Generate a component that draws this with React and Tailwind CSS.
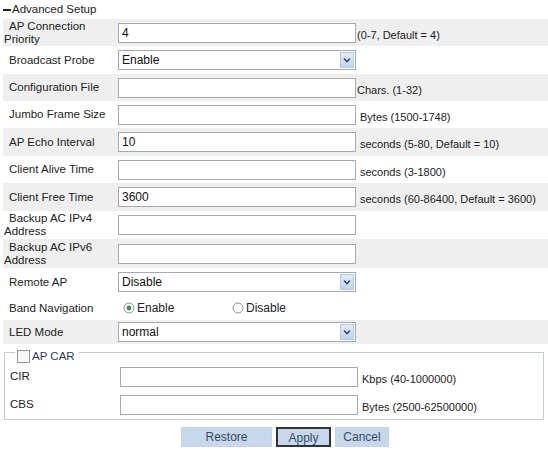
const rows = [
  { label: ['AP Connection', 'Priority'], type: 'input', value: '4', note: '(0-7, Default = 4)', h: 27, gray: true, tight: true },
  { label: ['Broadcast Probe'], type: 'select', value: 'Enable', h: 28 },
  { label: ['Configuration File'], type: 'input', value: '', note: 'Chars. (1-32)', h: 27, gray: true, tight: true },
  { label: ['Jumbo Frame Size'], type: 'input', value: '', note: 'Bytes (1500-1748)', h: 27 },
  { label: ['AP Echo Interval'], type: 'input', value: '10', note: 'seconds (5-80, Default = 10)', h: 28, gray: true },
  { label: ['Client Alive Time'], type: 'input', value: '', note: 'seconds (3-1800)', h: 27 },
  { label: ['Client Free Time'], type: 'input', value: '3600', note: 'seconds (60-86400, Default = 3600)', h: 28, gray: true },
  { label: ['Backup AC IPv4', 'Address'], type: 'input', value: '', h: 28 },
  { label: ['Backup AC IPv6', 'Address'], type: 'input', value: '', h: 29, gray: true },
  { label: ['Remote AP'], type: 'select', value: 'Disable', h: 28 },
  { label: ['Band Navigation'], type: 'radio', h: 24 },
  { label: ['LED Mode'], type: 'select', value: 'normal', h: 24, gray: true },
]

function TextBox({ value }) {
  return (
    <div className="flex h-[20px] w-[238px] shrink-0 items-center border border-[#a3aab3] bg-white pl-[3px] text-[12px] text-[#111]">
      {value}
    </div>
  )
}

function SelectBox({ value }) {
  return (
    <div className="flex h-[20px] w-[238px] shrink-0 items-center justify-between border border-[#a3aab3] bg-white pl-[3px] pr-[1px] text-[12px] text-[#111]">
      <span>{value}</span>
      <div className="flex h-[16px] w-[14px] items-center justify-center border border-[#b8c8de] bg-gradient-to-b from-[#e4ecf8] to-[#c3d3ea]">
        <svg width="8" height="6" viewBox="0 0 8 6">
          <path d="M1 1.5 L4 4.5 L7 1.5" fill="none" stroke="#2c4d86" strokeWidth="1.6" />
        </svg>
      </div>
    </div>
  )
}

function Radio({ checked }) {
  return (
    <svg width="12" height="12" viewBox="0 0 12 12" className="shrink-0">
      <circle cx="6" cy="6" r="5" fill="#fbfbfb" stroke="#8d959e" strokeWidth="1" />
      {checked && <circle cx="6" cy="6" r="2.4" fill="#3e8e4a" />}
    </svg>
  )
}

function Label({ lines }) {
  return (
    <div className="w-[115px] shrink-0 pl-[1px] indent-[5px] text-[11.5px] leading-[13px] text-[#222]">
      {lines.map((l, i) => (
        <div key={i} className={i > 0 ? 'indent-0' : ''}>
          {l}
        </div>
      ))}
    </div>
  )
}

export default function App() {
  return (
    <div className="w-[548px] bg-white font-['Liberation_Sans',Arial,sans-serif] text-[11px] text-[#222]">
      <div className="flex h-[19px] items-center pl-[3px] text-[11.5px]">
        <span className="mr-[1px] inline-block h-[2px] w-[8px] bg-[#222]" />
        <span>Advanced Setup</span>
      </div>

      <div className="pl-[3px]">
        {rows.map((r, i) => (
          <div
            key={i}
            className={`flex items-center ${r.gray ? 'bg-[#efefef]' : 'bg-white'}`}
            style={{ height: r.h }}
          >
            <Label lines={r.label} />
            {r.type === 'input' && <TextBox value={r.value} />}
            {r.type === 'select' && <SelectBox value={r.value} />}
            {r.type === 'radio' && (
              <div className="flex items-center pl-[5px] text-[12px]">
                <Radio checked />
                <span className="ml-[2px] w-[95px]">Enable</span>
                <Radio />
                <span className="ml-[2px]">Disable</span>
              </div>
            )}
            {r.note && (
              <span className={`whitespace-nowrap pt-[5px] ${r.tight ? 'pl-[1px]' : 'pl-[4px]'}`}>{r.note}</span>
            )}
          </div>
        ))}
      </div>

      <div className="relative mx-[4px] mt-[8px] border border-[#c3cbd3] pt-[10px]">
        <div className="absolute -top-[5px] left-[10px] flex items-center bg-white pr-[4px] pl-[2px] text-[11.5px]">
          <span className="mr-[2px] inline-block h-[13px] w-[13px] border border-[#8e969f] bg-gradient-to-br from-[#f2f2f2] to-[#ffffff]" />
          <span className="text-[#2c3b66]">AP CAR</span>
        </div>
        <div className="flex h-[28px] items-center">
          <div className="w-[115px] shrink-0 pl-[5px] text-[11.5px]">CIR</div>
          <TextBox value="" />
          <span className="whitespace-nowrap pl-[4px] pt-[5px]">Kbps (40-1000000)</span>
        </div>
        <div className="flex h-[28px] items-center">
          <div className="w-[115px] shrink-0 pl-[5px] text-[11.5px]">CBS</div>
          <TextBox value="" />
          <span className="whitespace-nowrap pl-[4px] pt-[5px]">Bytes (2500-62500000)</span>
        </div>
      </div>

      <div className="mt-[7px] flex justify-center gap-[4px] pl-[22px] text-[12px] text-[#3b4a6b]">
        <button className="h-[20px] w-[91px] border border-[#c4d5ea] bg-[#c7d7ec]">Restore</button>
        <button className="h-[20px] w-[55px] border-2 border-[#333] bg-[#c7d7ec]">Apply</button>
        <button className="h-[20px] w-[54px] border border-[#c4d5ea] bg-[#c7d7ec]">Cancel</button>
      </div>
    </div>
  )
}
